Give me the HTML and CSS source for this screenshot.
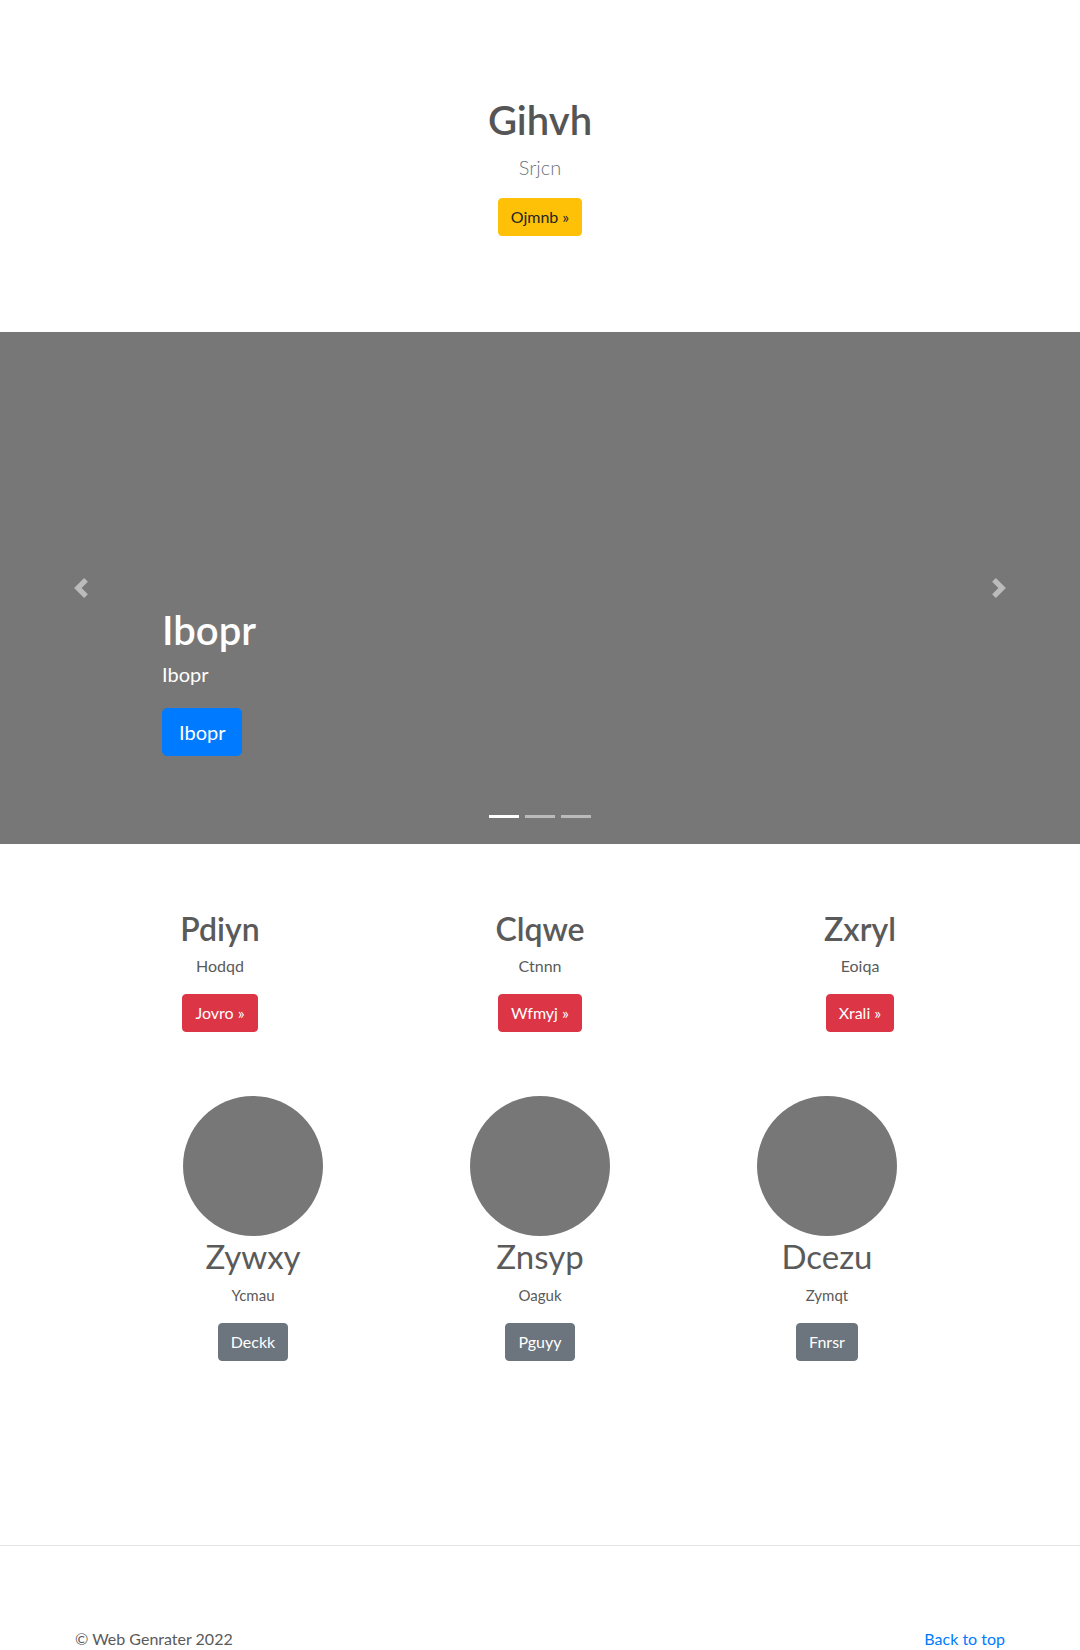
FILE: index.html
```html
<!DOCTYPE html>
<html lang="en">
<head>
<meta charset="utf-8">
<title>Gihvh</title>
<link rel="stylesheet" href="styles.css">
</head>
<body>
<header class="hero">
  <h1 class="hero-title">Gihvh</h1>
  <p class="lead">Srjcn</p>
  <a class="btn btn-warning" href="#">Ojmnb »</a>
</header>

<section class="carousel">
  <a class="control control-prev" href="#" aria-label="Previous">
    <svg class="control-icon" viewBox="0 0 8 8" width="20" height="20"><path d="M5.25 0l-4 4 4 4 1.5-1.5L4.25 4l2.5-2.5L5.25 0z"/></svg>
  </a>
  <div class="caption">
    <h1 class="caption-title">Ibopr</h1>
    <p class="caption-text">Ibopr</p>
    <a class="btn btn-lg btn-primary" href="#">Ibopr</a>
  </div>
  <a class="control control-next" href="#" aria-label="Next">
    <svg class="control-icon" viewBox="0 0 8 8" width="20" height="20"><path d="M2.75 0l-1.5 1.5L3.75 4l-2.5 2.5L2.75 8l4-4-4-4z"/></svg>
  </a>
  <ol class="indicators">
    <li class="indicator active"></li>
    <li class="indicator"></li>
    <li class="indicator"></li>
  </ol>
</section>

<main class="marketing">
  <div class="row-three">
    <div class="feature">
      <h2 class="feature-title">Pdiyn</h2>
      <p class="feature-text">Hodqd</p>
      <a class="btn btn-danger" href="#">Jovro »</a>
    </div>
    <div class="feature">
      <h2 class="feature-title">Clqwe</h2>
      <p class="feature-text">Ctnnn</p>
      <a class="btn btn-danger" href="#">Wfmyj »</a>
    </div>
    <div class="feature">
      <h2 class="feature-title">Zxryl</h2>
      <p class="feature-text">Eoiqa</p>
      <a class="btn btn-danger" href="#">Xrali »</a>
    </div>
  </div>

  <div class="row-people">
    <div class="person">
      <svg class="avatar" width="140" height="140" viewBox="0 0 140 140"><circle cx="70" cy="70" r="70" fill="#777"/></svg>
      <h2 class="person-name">Zywxy</h2>
      <p class="person-text">Ycmau</p>
      <a class="btn btn-secondary" href="#">Deckk</a>
    </div>
    <div class="person">
      <svg class="avatar" width="140" height="140" viewBox="0 0 140 140"><circle cx="70" cy="70" r="70" fill="#777"/></svg>
      <h2 class="person-name">Znsyp</h2>
      <p class="person-text">Oaguk</p>
      <a class="btn btn-secondary" href="#">Pguyy</a>
    </div>
    <div class="person">
      <svg class="avatar" width="140" height="140" viewBox="0 0 140 140"><circle cx="70" cy="70" r="70" fill="#777"/></svg>
      <h2 class="person-name">Dcezu</h2>
      <p class="person-text">Zymqt</p>
      <a class="btn btn-secondary" href="#">Fnrsr</a>
    </div>
  </div>
</main>

<hr class="divider">

<footer class="footer">
  <p class="footer-copy">© Web Genrater 2022</p>
  <a class="footer-link" href="#">Back to top</a>
</footer>
</body>
</html>
```

FILE: styles.css
```css
* { box-sizing: border-box; }

body {
  margin: 0;
  font-family: Lato, "Liberation Sans", sans-serif;
  font-size: 16px;
  line-height: 24px;
  color: #5a5a5a;
  background: #fff;
}

a { text-decoration: none; }

.btn {
  display: inline-block;
  font-size: 16px;
  line-height: 24px;
  padding: 6px 12px;
  border: 1px solid transparent;
  border-radius: 4px;
  vertical-align: middle;
}
.btn-lg {
  font-size: 20px;
  line-height: 30px;
  padding: 8px 16px;
  border-radius: 5px;
}
.btn-warning { background: #ffc107; border-color: #ffc107; color: #212529; }
.btn-primary { background: #007bff; border-color: #007bff; color: #fff; }
.btn-danger { background: #dc3545; border-color: #dc3545; color: #fff; }
.btn-secondary { background: #6c757d; border-color: #6c757d; color: #fff; }

/* hero */
.hero {
  padding: 96px 0;
  text-align: center;
}
.hero-title {
  margin: 0 0 8px;
  font-size: 40px;
  line-height: 48px;
  font-weight: 600;
  color: #555;
}
.lead {
  margin: 0 0 16px;
  font-size: 20px;
  line-height: 30px;
  font-weight: 300;
  color: #6c757d;
}

/* carousel */
.carousel {
  position: relative;
  height: 512px;
  background: #777;
  display: flex;
  align-items: flex-end;
}
.caption {
  margin-left: 15%;
  padding-bottom: 88px;
  color: #fff;
}
.caption-title {
  margin: 0 0 5px;
  font-size: 40px;
  line-height: 48px;
  font-weight: 600;
}
.caption-text {
  margin: 0 0 19px;
  font-size: 20px;
  line-height: 30px;
}
.control {
  position: absolute;
  top: 0;
  bottom: 0;
  width: 15%;
  display: flex;
  align-items: center;
  justify-content: center;
  opacity: 0.5;
}
.control-prev { left: 0; }
.control-next { right: 0; }
.control-icon { fill: #fff; display: block; }
.indicators {
  position: absolute;
  left: 0;
  right: 0;
  bottom: 26px;
  margin: 0;
  padding: 0;
  list-style: none;
  display: flex;
  justify-content: center;
  gap: 6px;
}
.indicator {
  width: 30px;
  height: 3px;
  background: #fff;
  opacity: 0.5;
}
.indicator.active { opacity: 1; }

/* marketing */
.marketing {
  width: 960px;
  margin: 0 auto;
  padding-top: 66px;
}
.row-three {
  display: grid;
  grid-template-columns: repeat(3, 1fr);
  text-align: center;
}
.feature-title {
  margin: 0 0 6px;
  font-size: 32px;
  line-height: 38px;
  font-weight: 600;
}
.feature-text {
  margin: 0 0 16px;
  font-size: 16px;
  line-height: 24px;
}

.row-people {
  display: grid;
  grid-template-columns: repeat(3, 287px);
  justify-content: center;
  text-align: center;
  margin-top: 64px;
}
.avatar {
  display: block;
  margin: 0 auto 1px;
}
.person-name {
  margin: 0 0 8px;
  font-size: 33px;
  line-height: 38px;
  font-weight: 400;
}
.person-text {
  margin: 0 0 16px;
  font-size: 15px;
  line-height: 24px;
}

/* footer */
.divider {
  margin: 184px 0 0;
  border: 0;
  border-top: 1px solid #e5e5e5;
}
.footer {
  width: 960px;
  margin: 0 auto;
  padding: 81px 15px 0;
  display: flex;
  justify-content: space-between;
}
.footer-copy { margin: 0 0 16px; }
.footer-link { color: #007bff; }
```
